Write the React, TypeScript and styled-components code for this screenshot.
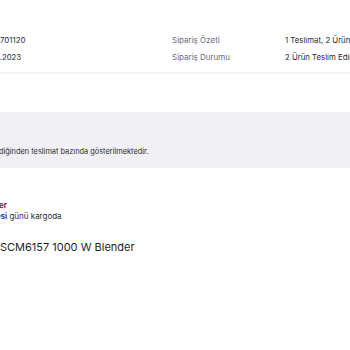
import React from 'react'
import styled, { createGlobalStyle } from 'styled-components'

const GlobalStyle = createGlobalStyle`
  html, body {
    margin: 0;
    padding: 0;
    background: #ffffff;
    overflow: hidden;
  }
  body {
    font-family: Inter, 'Liberation Sans', sans-serif;
    color: #333333;
  }
`

export default function App() {
  return (
    <>
      <GlobalStyle />
      <Page>
        {/* Sipariş bilgileri */}
        <InfoRow>
          <InfoBlock>
            <Value $shift={-19}>3520701120</Value>
            <Value $shift={-20}>12.04.2023</Value>
          </InfoBlock>
          <InfoBlock $labelCol>
            <Label>Sipariş Özeti</Label>
            <Value>1 Teslimat, 2 Ürün</Value>
            <Label>Sipariş Durumu</Label>
            <Value>2 Ürün Teslim Edildi</Value>
          </InfoBlock>
        </InfoRow>

        {/* Bilgi bandı */}
        <Notice>
          <NoticeText $shift={-14}>
            içerdiğinden teslimat bazında gösterilmektedir.
          </NoticeText>
        </Notice>

        {/* Teslimat */}
        <Delivery>
          <Seller $shift={-22}>Ürünler</Seller>
          <Cargo $shift={-15}>
            <strong>Ertesi</strong> günü kargoda
          </Cargo>
          <ProductName $shift={-35}>Vestel SCM6157 1000 W Blender</ProductName>
        </Delivery>
      </Page>
    </>
  )
}

const Page = styled.main`
  display: flex;
  flex-direction: column;
  width: 350px;
`

const InfoRow = styled.section`
  display: grid;
  grid-template-columns: 172px 1fr;
  padding-top: 31px;
  padding-bottom: 7px;
  border-bottom: 1px solid #f1f1f3;
  box-shadow: 0 1px 2px rgba(0, 0, 0, 0.03);
`

const InfoBlock = styled.div<{ $labelCol?: boolean }>`
  display: grid;
  grid-template-columns: ${({ $labelCol }) => ($labelCol ? '113px 1fr' : '1fr')};
  grid-auto-rows: 17px;
  align-items: center;
  white-space: nowrap;
`

const Label = styled.span`
  font-size: 8px;
  color: #6b6b78;
`

const Value = styled.span<{ $shift?: number }>`
  font-size: 7.8px;
  color: #2b2b33;
  margin-left: ${({ $shift }) => $shift ?? 0}px;
`

const Notice = styled.section`
  margin-top: 39px;
  height: 56px;
  background: #f1f0f5;
  display: flex;
  align-items: flex-end;
  padding-bottom: 10px;
  box-sizing: border-box;
`

const NoticeText = styled.p<{ $shift: number }>`
  margin: 0 0 0 ${({ $shift }) => $shift}px;
  font-size: 7.4px;
  line-height: 12px;
  color: #2b2b33;
  white-space: nowrap;
`

const Delivery = styled.section`
  display: flex;
  flex-direction: column;
  padding-top: 32px;
  white-space: nowrap;
`

const Seller = styled.span<{ $shift: number }>`
  margin-left: ${({ $shift }) => $shift}px;
  font-size: 8px;
  line-height: 11px;
  font-weight: 600;
  color: #2b2b33;
`

const Cargo = styled.span<{ $shift: number }>`
  margin-left: ${({ $shift }) => $shift}px;
  font-size: 8px;
  line-height: 11px;
  color: #2b2b33;

  strong {
    font-weight: 600;
  }
`

const ProductName = styled.h3<{ $shift: number }>`
  margin: 17px 0 0 ${({ $shift }) => $shift}px;
  font-size: 11px;
  line-height: 16px;
  font-weight: 400;
  color: #1f1f26;
`
